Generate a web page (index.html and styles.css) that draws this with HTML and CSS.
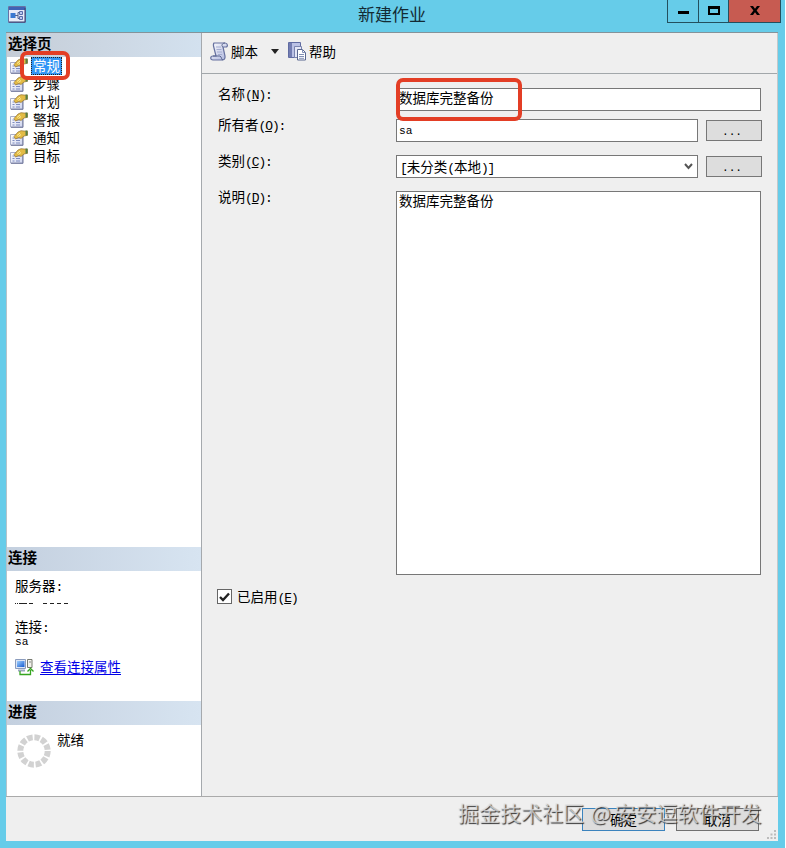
FILE: index.html
```html
<!DOCTYPE html>
<html lang="zh-CN">
<head>
    <meta charset="UTF-8">
    <meta name="viewport" content="width=device-width, initial-scale=1.0">
    <title>新建作业</title>
    <link rel="stylesheet" href="styles.css">
</head>
<body>
    <!-- shared icon for the page list -->
    <svg class="defs" width="0" height="0">
        <defs>
            <linearGradient id="paper" x1="0" y1="0" x2="1" y2="1">
                <stop offset="0" stop-color="#fff"/>
                <stop offset="1" stop-color="#cdd3ee"/>
            </linearGradient>
            <linearGradient id="scroll" x1="0" y1="0" x2="1" y2="1">
                <stop offset="0" stop-color="#fff"/>
                <stop offset="1" stop-color="#a9b2dc"/>
            </linearGradient>
            <linearGradient id="screen" x1="0" y1="0" x2="1" y2="1">
                <stop offset="0" stop-color="#9fd0ff"/>
                <stop offset="1" stop-color="#1459cf"/>
            </linearGradient>
        </defs>
        <symbol id="page-icon" viewBox="0 0 18 16">
            <path d="M.5 4.500h12v10.500h-12z" fill="url(#paper)" stroke="#a9afc9"/>
            <path d="M1 15.300h12V6" fill="none" stroke="#6d7599"/>
            <path d="M2.500 8h2M6 8h4M2.500 10.500h2M6 10.500h4M2.500 13h2M6 13h4" stroke="#7e8cc0" stroke-width="1.200"/>
            <path d="M4 6.500 8 2l3-1.300 3 .3 3.500.3v4L14 6l-3 2.500-2-1L5.500 9z" fill="#e3bb45" stroke="#927130" stroke-width=".7"/>
            <path d="M7 5.500 10 3M8.500 6.500 11 4.500" stroke="#fff0a0"/>
            <path d="M15.500.5h2v5h-2z" fill="#547f45"/>
        </symbol>
    </svg>

    <div class="window">
        <div class="title-bar">
            <svg class="app-icon" width="18" height="17" viewBox="0 0 18 17">
                <path d="M.5.5h17v16H.5z" fill="#e7ebf8" stroke="#6673a5"/>
                <path d="M1 1h16v3H1z" fill="#3f62b5"/>
                <path d="M1 16h16V2" fill="none" stroke="#34406f"/>
                <path d="M2.500 7h5v5h-5z" fill="#3978d1"/>
                <path d="M7 9.500h3M10 6.500v6M10 6.500h2M10 12.500h2" fill="none" stroke="#54628e"/>
                <path d="M11.500 5.500h3v3h-3zM11.500 10.500h3v3h-3z" fill="#b9c8f0" stroke="#596da9"/>
            </svg>
            <div class="title">新建作业</div>
            <div class="window-buttons">
                <div class="win-btn minimize"><span></span></div>
                <div class="win-btn maximize"><span></span></div>
                <div class="win-btn close">
                    <svg width="10" height="9" viewBox="0 0 10 9"><path d="M0 0h3l2 2.800L7 0h3L6.600 4.500 10 9H7L5 6.200 3 9H0l3.400-4.500z"/></svg>
                </div>
            </div>
        </div>

        <div class="dialog">
            <div class="main">
                <div class="sidebar">
                    <h2 class="panel-title first">选择页</h2>
                    <ul class="page-list">
                        <li class="selected"><svg width="18" height="16"><use href="#page-icon"/></svg><span>常规</span></li>
                        <li><svg width="18" height="16"><use href="#page-icon"/></svg><span>步骤</span></li>
                        <li><svg width="18" height="16"><use href="#page-icon"/></svg><span>计划</span></li>
                        <li><svg width="18" height="16"><use href="#page-icon"/></svg><span>警报</span></li>
                        <li><svg width="18" height="16"><use href="#page-icon"/></svg><span>通知</span></li>
                        <li><svg width="18" height="16"><use href="#page-icon"/></svg><span>目标</span></li>
                    </ul>

                    <h2 class="panel-title">连接</h2>
                    <div class="connection">
                        <div class="row">服务器<span class="lat">:</span></div>
                        <!-- server name is masked -->
                        <svg class="server-name" width="54" height="3" viewBox="0 0 54 3">
                            <path d="M0 1.500h1M2 1.500h1M4 1.500h8M14 1.500h4M28 1.500h4M35 1.500h4M42 1.500h4M49 1.500h4" stroke="#222"/>
                        </svg>
                        <div class="row">连接<span class="lat">:</span></div>
                        <div class="row user small">sa</div>
                        <div class="row link">
                            <svg width="19" height="18" viewBox="0 0 19 18">
                                <path d="M.5 1.500h10v9H.5z" fill="#dce5f5" stroke="#8b9cbd"/>
                                <path d="M2 3h7.500v6H2z" fill="url(#screen)"/>
                                <path d="M3 12.500h7" stroke="#9aa7be" stroke-width="2"/>
                                <path d="M12.500 1.500h4.500v8h-4.500z" fill="#f3f3ec" stroke="#77796f"/>
                                <path d="M14 4h2" stroke="#888"/>
                                <path d="M5 13v3.500h10.500V12M12.500 13.500l3-3 3 3" fill="none" stroke="#35a51f" stroke-width="1.300"/>
                            </svg>
                            <a href="#">查看连接属性</a>
                        </div>
                    </div>

                    <h2 class="panel-title">进度</h2>
                    <div class="progress">
                        <svg width="34" height="34" viewBox="0 0 34 34">
                            <circle cx="17" cy="17" r="13.700" fill="none" stroke="#d2d2d2" stroke-width="6" stroke-dasharray="5.400 1.773"/>
                        </svg>
                        <span>就绪</span>
                    </div>
                </div>

                <div class="content">
                    <div class="toolbar">
                        <svg width="19" height="19" viewBox="0 0 19 19">
                            <path d="M4 1h11c3 0 3 4 1 4h-3l2 9c.4 3-1 4-3 4H3c-3 0-3-4 0-4h3L4 6C3 3 3 2 4 1z" fill="url(#scroll)" stroke="#66719f" stroke-width="1.200"/>
                            <path d="M13 5c-2-1-1-4 2-4M3 14h7c2 1 1 4 3 4" fill="none" stroke="#59658f"/>
                            <path d="M6 5h5M6.500 7.500h5M7 10h5M8 12.500h4" stroke="#a4acd0"/>
                        </svg>
                        <span class="tool-text">脚本</span>
                        <span class="arrow"></span>
                        <svg width="19" height="19" viewBox="0 0 19 19">
                            <path d="M.5.500h12v15h-12z" fill="#bbc2e5" stroke="#606ca2"/>
                            <path d="M1 1h3v14H1z" fill="#737db2"/>
                            <path d="M6.500 4.500h7v11h-7z" fill="#e5e8f7" stroke="#7a84af"/>
                            <path d="M9.500 7.500h5l3 3v7.500h-8z" fill="#fff" stroke="#59678f"/>
                            <path d="M14.500 7.500v3h3M11 12.500h5M11 14.500h5M11 16.300h5" fill="none" stroke="#8290b6"/>
                        </svg>
                        <span class="tool-text">帮助</span>
                    </div>

                    <div class="form">
                        <div class="form-row name-row">
                            <label>名称<span class="lat">(<u>N</u>):</span></label>
                            <div class="field">数据库完整备份</div>
                        </div>
                        <div class="form-row owner-row">
                            <label>所有者<span class="lat">(<u>O</u>):</span></label>
                            <div class="field"><span class="small">sa</span></div>
                            <button class="browse">...</button>
                        </div>
                        <div class="form-row category-row">
                            <label>类别<span class="lat">(<u>C</u>):</span></label>
                            <div class="field select">
                                <span><span class="lat">[</span>未分类<span class="lat">(</span>本地<span class="lat">)]</span></span>
                                <svg width="9" height="7" viewBox="0 0 9 7"><path d="M1 1l3.500 4L8 1" fill="none" stroke="#555" stroke-width="2"/></svg>
                            </div>
                            <button class="browse">...</button>
                        </div>
                        <div class="form-row desc-row">
                            <label>说明<span class="lat">(<u>D</u>):</span></label>
                            <div class="field textarea">数据库完整备份</div>
                        </div>
                        <div class="enabled">
                            <span class="checkbox">
                                <svg width="11" height="10" viewBox="0 0 11 10"><path d="M1 5l3 3 6-6.500" fill="none" stroke="#222" stroke-width="2.400"/></svg>
                            </span>
                            <span class="check-text">已启用<span class="lat">(<u>E</u>)</span></span>
                        </div>
                    </div>
                </div>
            </div>

            <div class="footer">
                <button class="btn ok">确定</button>
                <button class="btn">取消</button>
                <svg class="grip" width="10" height="10" viewBox="0 0 10 10">
                    <path d="M7 0h2v2H7zM3.500 3.500h2v2h-2zM7 3.500h2v2H7zM0 7h2v2H0zM3.500 7h2v2h-2zM7 7h2v2H7z" fill="#bcbcbc"/>
                </svg>
            </div>
        </div>

        <!-- annotations on top of the dialog -->
        <div class="mark mark-page"></div>
        <div class="mark mark-name"></div>
        <div class="watermark">掘金技术社区 <span class="at">@</span>安安逗软件开发</div>
    </div>
</body>
</html>
```
FILE: styles.css
```css
* {
    box-sizing: border-box;
}

body {
    margin: 0;
    background-color: #fff;
    font-family: "Noto Sans CJK SC", sans-serif;
    font-size: 13.5px;
    line-height: 18px;
    color: #000;
}

.defs {
    position: absolute;
}

svg {
    display: block;
    flex-shrink: 0;
}

.lat {
    font-family: "Liberation Mono", monospace;
    font-size: 13px;
    line-height: 1;
    letter-spacing: -1.1px;
}

.small {
    font-family: "Liberation Mono", monospace;
    font-size: 11.2px;
}

.window {
    position: relative;
    display: flex;
    flex-direction: column;
    width: 785px;
    height: 848px;
    padding: 0 7px 7px 6px;
    background-color: #66cce9;
}

/* title bar */
.title-bar {
    display: flex;
    flex-shrink: 0;
    height: 32px;
    justify-content: space-between;
    align-items: flex-start;
    margin-right: -3px;
}

.app-icon {
    margin: 6px 0 0 2px;
}

.title {
    margin: 4px 0 0 90px;
    font-size: 17px;
    line-height: 20px;
    color: #132b34;
}

.window-buttons {
    display: flex;
    height: 23px;
    border: 1px solid #23505e;
    border-top: none;
    margin-left: -1px;
}

.win-btn {
    display: flex;
    justify-content: center;
    width: 31px;
    border-right: 1px solid #23505e;
}

.minimize span {
    width: 11px;
    height: 3px;
    margin-top: 11px;
    background-color: #000;
}

.maximize {
    width: 30px;
}

.maximize span {
    width: 12px;
    height: 9px;
    margin-top: 6px;
    border: 2px solid #000;
    border-top-width: 3px;
}

.close {
    width: 51px;
    padding-top: 6px;
    border-right: none;
    background-color: #c75b51;
}

.dialog {
    display: flex;
    flex-direction: column;
    flex: 1;
    border-top: 1px solid #84939a;
    background-color: #efefef;
}

.main {
    display: flex;
    height: 764px;
    border-bottom: 1px solid #aaa;
}

/* left side */
.sidebar {
    display: flex;
    flex-direction: column;
    width: 196px;
    border-left: 1px solid #b5c3ca;
    border-right: 1px solid #a5a9ad;
    background-color: #fff;
}

.panel-title {
    height: 24px;
    margin: 0;
    padding-left: 1px;
    background: linear-gradient(to right, #c4d0df, #d7e4f1);
    font-size: 14.5px;
    font-weight: bold;
    line-height: 20px;
}

.panel-title.first {
    background: linear-gradient(to right, #c5cdd7, #d3e1ef);
}

.page-list {
    height: 490px;
    margin: 0;
    padding: 0 0 0 3px;
    list-style: none;
}

.page-list li {
    display: flex;
    gap: 3px;
    height: 18px;
    align-items: center;
}

.page-list span {
    height: 17px;
    padding: 0 2px;
    line-height: 14px;
}

.page-list .selected span {
    height: 18px;
    padding-top: 1px;
    outline: 1px dotted #222;
    outline-offset: -1px;
    background-color: #3296f5;
    color: #fff;
}

.connection {
    height: 130px;
    padding: 5px 8px 0;
}

.server-name {
    margin: 8px 0 12px;
}

.user {
    margin-top: 2px;
    line-height: 10px;
}

.link {
    display: flex;
    gap: 6px;
    margin-top: 10px;
    align-items: flex-start;
}

.link svg {
    margin-top: 1px;
}

.link a {
    color: #0000e8;
    text-underline-offset: 2px;
}

.progress {
    display: flex;
    gap: 6px;
    padding: 5px 0 0 10px;
}

.progress svg {
    margin-top: 4px;
}

/* right side */
.content {
    flex: 1;
    border-right: 1px solid #c3c8ca;
}

.toolbar {
    display: flex;
    height: 41px;
    align-items: center;
    padding: 0 0 3px 8px;
    border-bottom: 1px solid #a2a7aa;
}

.tool-text {
    margin: -2px 0 0 2px;
}

.arrow {
    margin: 0 9px 0 13px;
    border: 4.5px solid transparent;
    border-top: 5px solid #222;
    border-bottom: none;
}

.form {
    padding: 14px 16px 0 16px;
}

.form-row {
    display: flex;
    align-items: flex-start;
}

.form-row label {
    width: 178px;
    margin-top: -4px;
}

.field {
    flex: 1;
    height: 23px;
    padding: 0 2px;
    border: 1px solid #777;
    background-color: #fff;
    line-height: 17px;
}

.name-row {
    margin-bottom: 8px;
}

.owner-row {
    margin-bottom: 13px;
}

.category-row {
    margin-bottom: 13px;
}

.select {
    display: flex;
    justify-content: space-between;
    align-items: center;
    padding: 0 4px 1px 3px;
}

.browse {
    width: 56px;
    height: 21px;
    margin: 1px -1px 0 8px;
    padding: 2px 4px 0 0;
    border: 1px solid #777;
    background-color: #ddd;
    font-family: "Liberation Mono", monospace;
    font-size: 11.2px;
}

.textarea {
    height: 384px;
}

.enabled {
    display: flex;
    gap: 5px;
    margin: 13px 0 0 -1px;
    align-items: center;
}

.check-text {
    margin-top: -1px;
}

.checkbox {
    display: flex;
    width: 15px;
    height: 15px;
    justify-content: center;
    align-items: center;
    border: 1px solid #666;
    background-color: #fff;
}

/* footer */
.footer {
    display: flex;
    flex: 1;
    justify-content: flex-end;
    padding-top: 11px;
}

.btn {
    width: 83px;
    height: 23px;
    margin-right: 11px;
    padding: 0;
    border: 1px solid #707070;
    background-color: #ddd;
    font-family: inherit;
    font-size: 13.5px;
    line-height: 21px;
}

.btn.ok {
    border-color: #3b83bd;
}

.grip {
    margin: 22px 1px 0 -3px;
}

/* annotations */
.mark {
    position: absolute;
    border: 4px solid #e33e25;
    border-radius: 7px;
}

.mark-page {
    left: 20px;
    top: 51px;
    width: 50px;
    height: 29px;
}

.mark-name {
    left: 396px;
    top: 78px;
    width: 126px;
    height: 43px;
}

.watermark {
    position: absolute;
    left: 458px;
    top: 799px;
    font-size: 21px;
    line-height: 26px;
    white-space: nowrap;
    color: rgba(225, 225, 225, 0.75);
    text-shadow: 1px 1px 1px #333;
}

.at {
    margin: 0 4px 0 2px;
}
```
